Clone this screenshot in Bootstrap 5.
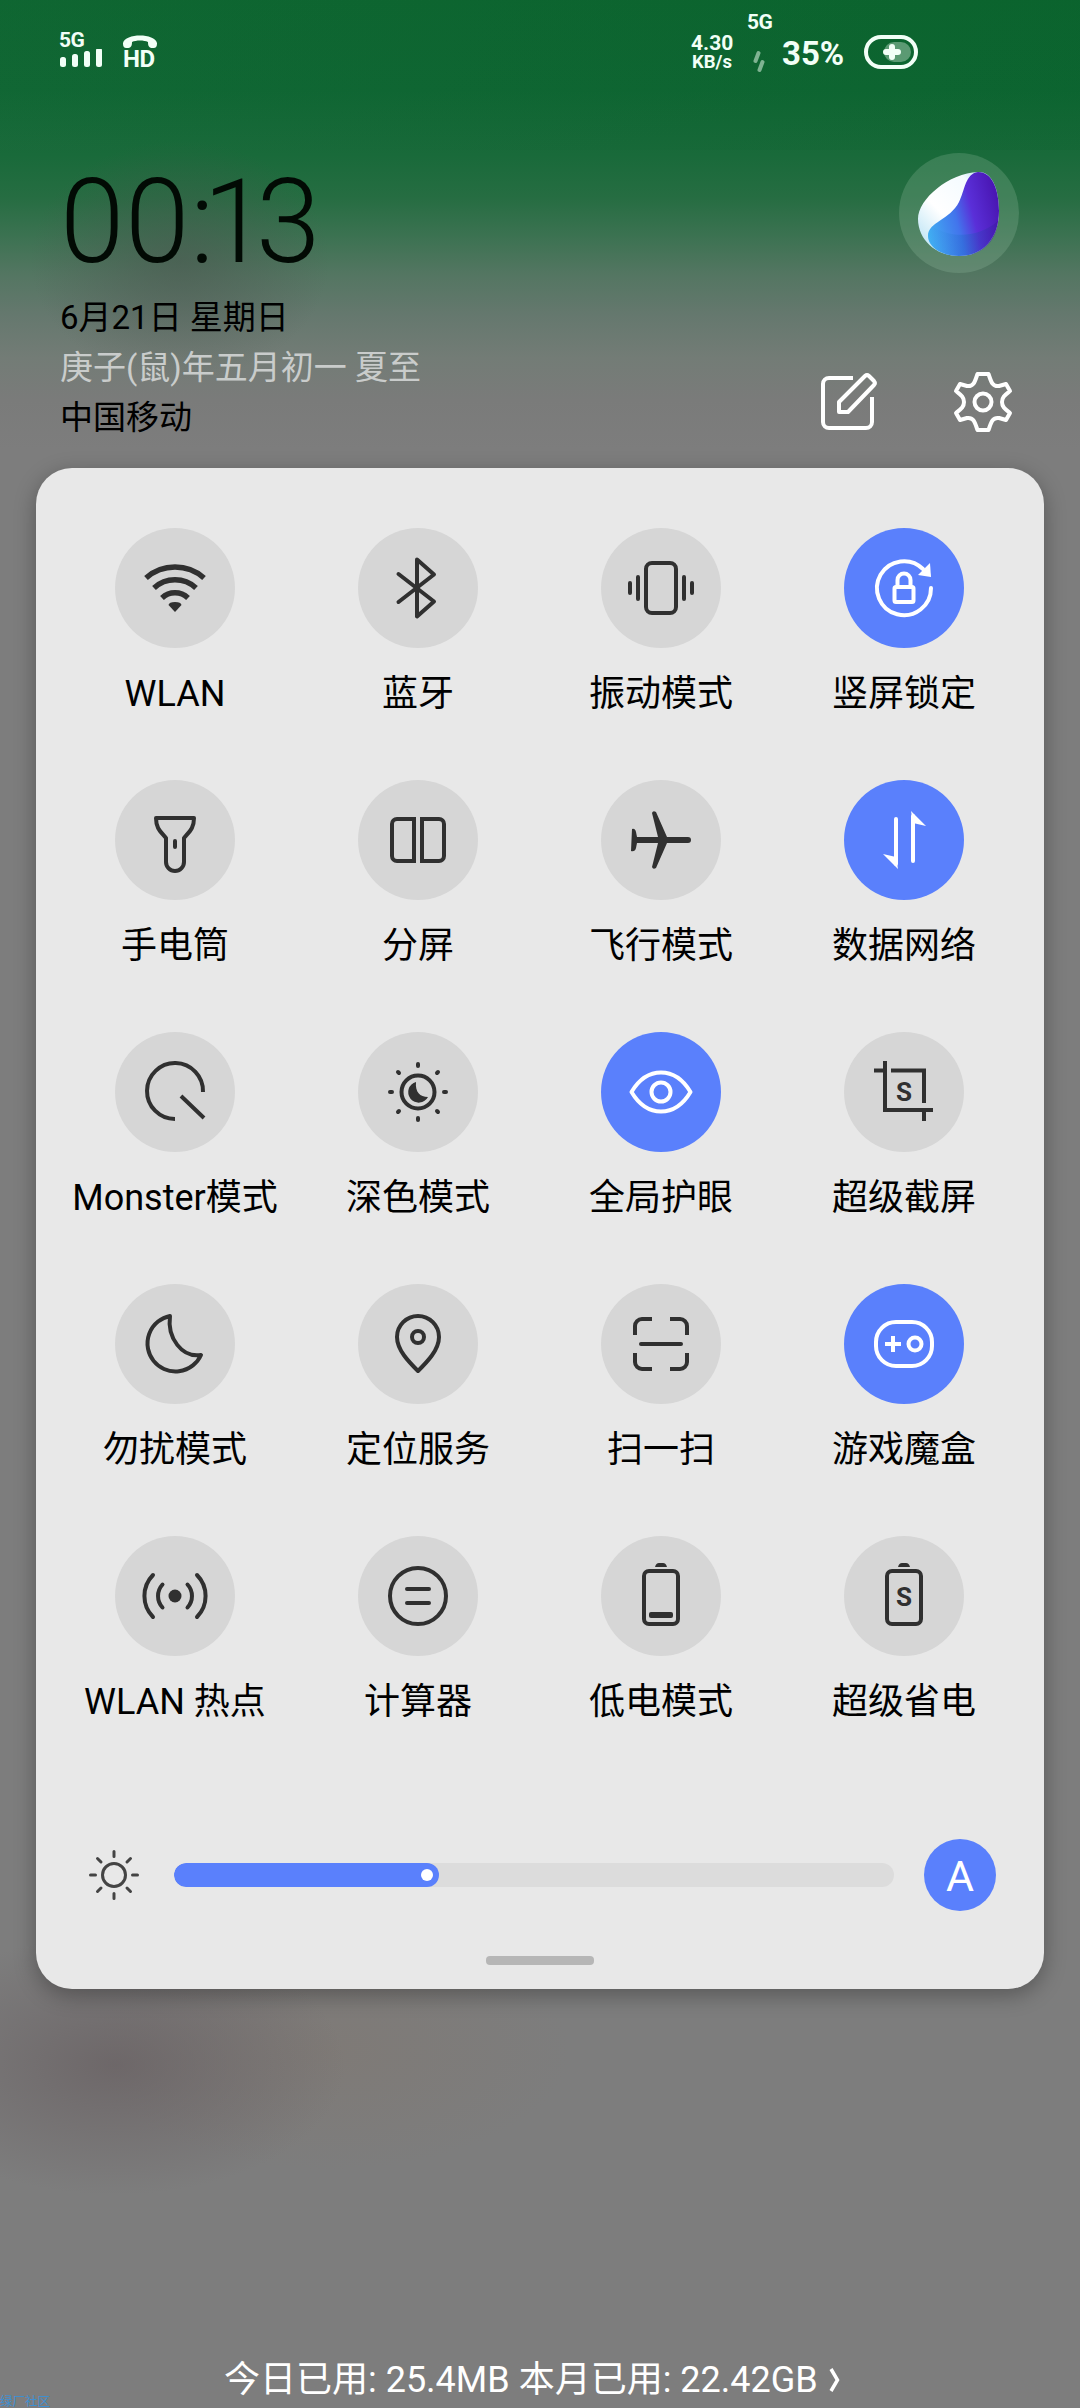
<!DOCTYPE html>
<html lang="zh-CN">
<head>
<meta charset="utf-8">
<meta name="viewport" content="width=device-width, initial-scale=1">
<title>控制中心</title>
<link href="https://cdn.jsdelivr.net/npm/bootstrap@5.3.0/dist/css/bootstrap.min.css" rel="stylesheet">
<style>
  body { font-family: Roboto, "Noto Sans CJK SC", sans-serif; color: #000; background: #7c7c7c; }
  .screen {
    width: 1080px; height: 2408px; overflow: hidden;
    background:
      radial-gradient(ellipse 230px 130px at 115px 2065px, rgba(104,96,98,.75), rgba(104,96,98,0)),
      radial-gradient(ellipse 240px 120px at 330px 2050px, rgba(128,118,110,.45), rgba(128,118,110,0)),
      radial-gradient(ellipse 150px 120px at 180px 260px, rgba(74,84,78,.55), rgba(74,84,78,0)),
      linear-gradient(90deg, rgba(40,110,70,.1), rgba(0,90,35,.12)) 0 0/1080px 150px no-repeat,
      linear-gradient(180deg, #0c652f 0, #0e6632 90px, #196a3a 155px, #266d42 198px, #3b7251 235px, #547662 275px, #65786e 315px, #737c76 358px, #7a7b7a 400px, #7d7d7d 450px, #7d7d7d 100%);
  }
  .statusbar { height: 90px; padding: 0 161px 0 59px; color: #f2fff7; }
  .statusbar svg, .tile svg { display: block; }
  .st-5g { font-size: 21px; font-weight: 700; line-height: 18px; letter-spacing: -.5px; }
  .st-left { padding-top: 31px; }
  .st-hd { font-size: 24px; font-weight: 700; line-height: 17px; width: 34px; margin-left: 20px; letter-spacing: -.5px; }
  .st-rate { width: 42px; margin-top: 33px; font-weight: 700; font-size: 21px; line-height: 20px; text-align: center; }
  .st-unit { font-size: 18.5px; line-height: 18px; }
  .st-net { width: 24px; margin: 13px 0 0 14px; }
  .st-pct { font-size: 33px; font-weight: 700; line-height: 40px; margin: 34px 0 0 11px; width: 66px; }
  .st-bat { margin: 34px 0 0 15px; }
  .heading { height: 378px; padding: 0 61px 0 60px; }
  .clock { height: 130px; margin-top: 65px; font-size: 116px; line-height: 134px; font-weight: 300; color: #020a04; }
  .clock span { width: 65px; }
  .clock .c-colon { width: 26px; margin-right: -2px; }
  .clock .c-one { width: 62px; margin-left: -11px; margin-right: -9px; }
  .dates { font-size: 33px; line-height: 50px; margin-top: 8px; white-space: nowrap; }
  .lunar { color: #c9cccb; }
  .assistant { width: 120px; height: 120px; margin-top: 63px; background: rgba(150,190,165,.25); }
  .tools { margin-top: 97px; gap: 67px; }
  .panel {
    width: 1008px; height: 1521px; margin: 0 36px; border-radius: 36px;
    background: #e8e8e8; box-shadow: 0 6px 22px rgba(0,0,0,.3);
  }
  .tiles { padding: 60px 18.5px 0 17.5px; }
  .tile { height: 252px; width: 243px; font-size: 36px; line-height: 54px; white-space: nowrap; }
  .disc { width: 120px; height: 120px; margin-bottom: 19px; background: #d6d6d6; color: #303030; }
  .disc.on { background: #5a80fc; color: #fff; }
  .disc svg { width: 120px; height: 120px; fill: none; stroke: currentColor; stroke-width: 4; }
  .disc .solid { fill: currentColor; stroke: none; }
  .disc text { font: 700 26px Roboto, sans-serif; fill: currentColor; stroke: none; text-anchor: middle; }
  .bright { height: 72px; margin-top: 51px; padding-left: 53px; }
  .track { width: 720px; height: 24px; margin: 0 30px 0 35px; background: #dcdcdc; border-radius: 12px; }
  .track .progress-bar { background: #5a80fc; border-radius: 12px; padding-right: 6px; }
  .knob { width: 12px; height: 12px; background: #fff; }
  .auto { width: 72px; height: 72px; background: #5a80fc; color: #fff; font-size: 43px; line-height: 74px; font-weight: 400; }
  .handle { width: 108px; height: 9px; margin-top: 45px; background: #b6b6b6; border-radius: 4px; }
  .usage { height: 419px; padding: 364px 0 0 224px; font-size: 36px; line-height: 54px; color: #fff; white-space: nowrap; }
  .usage svg { margin-left: 9px; margin-bottom: 5px; }
  .stamp { left: 0; bottom: 0; font-size: 12.5px; line-height: 13px; color: #3f8fd0; }
</style>
</head>
<body>
<main class="screen position-relative">
  <header class="statusbar d-flex justify-content-between">
    <div class="st-left d-flex">
      <div>
        <div class="st-5g">5G</div>
        <svg width="44" height="20" viewBox="0 0 44 20" fill="currentColor"><rect x="1" y="8" width="6" height="10" rx="2.5"/><rect x="13" y="5" width="6" height="13" rx="2.5"/><rect x="25" y="2" width="6" height="16" rx="2.5"/><rect x="37" y="-1" width="6" height="19" rx="2.5"/></svg>
      </div>
      <div class="st-hd">
        <svg width="34" height="20" viewBox="0 0 34 20" fill="currentColor"><path d="M0 12C2 2 32 2 34 12C34 16 33 17 30 17C26 17 25 15 25 11C21 9 13 9 9 11C9 15 8 17 4 17C1 17 0 16 0 12Z"/></svg>
        HD
      </div>
    </div>
    <div class="d-flex">
      <div class="st-rate">4.30<div class="st-unit">KB/s</div></div>
      <div class="st-net">
        <div class="st-5g">5G</div>
        <svg width="24" height="46" viewBox="0 0 24 46" stroke="#7fb392" stroke-width="4" stroke-linecap="round"><path d="M11.500 22L8.500 30M15.500 31L12.500 39"/></svg>
      </div>
      <div class="st-pct">35%</div>
      <svg class="st-bat" width="56" height="36" viewBox="0 0 56 36"><rect x="3" y="3" width="50" height="30" rx="15" fill="none" stroke="currentColor" stroke-width="4"/><rect x="21" y="8" width="27" height="20" rx="10" fill="#5b9a73"/><path d="M29 13v10M23 18h12" stroke="currentColor" stroke-width="6" stroke-linecap="round"/></svg>
    </div>
  </header>

  <section class="heading d-flex justify-content-between">
    <div>
      <div class="clock d-flex"><span>0</span><span>0</span><span class="c-colon">:</span><span class="c-one">1</span><span>3</span></div>
      <div class="dates">
        <div>6月21日 星期日</div>
        <div class="lunar">庚子(鼠)年五月初一 夏至</div>
        <div>中国移动</div>
      </div>
    </div>
    <div class="d-flex flex-column align-items-end">
      <div class="assistant rounded-circle">
        <svg width="120" height="120" viewBox="0 0 120 120">
          <defs>
            <linearGradient id="gw" x1="0" y1="1" x2="1" y2="0"><stop offset="0" stop-color="#a9dcf2"/><stop offset=".4" stop-color="#fff"/><stop offset=".75" stop-color="#f4fbff"/><stop offset="1" stop-color="#8fc4e8"/></linearGradient>
            <linearGradient id="gb" x1="0" y1=".75" x2="1" y2=".45"><stop offset="0" stop-color="#41b0f2"/><stop offset=".42" stop-color="#4274ec"/><stop offset=".65" stop-color="#5a2fd8"/><stop offset="1" stop-color="#4a17b4"/></linearGradient>
            <linearGradient id="gs" x1="0" y1="0" x2="1" y2="0"><stop offset="0" stop-color="#3da4f0" stop-opacity=".2"/><stop offset=".5" stop-color="#2668cc"/><stop offset="1" stop-color="#3c12a0"/></linearGradient>
          </defs>
          <path d="M79 19C93 18 100 36 100 58C100 85 84 103 60 103C36 103 19 86 19 66C19 46 50 20 79 19Z" fill="url(#gw)"/>
          <path d="M79 19C93 19 100 36 100 58C100 85 84 103 60 103C43 103 29 94 29 83C29 69 51 67 60 49C66 37 66 21 79 19Z" fill="url(#gb)"/>
          <path d="M33 73C50 85 78 86 99 68C97 90 82 103 60 103C43 103 29 94 29 83C29 79 31 76 33 73Z" fill="url(#gs)" opacity=".45"/>
        </svg>
      </div>
      <div class="tools d-flex">
        <svg width="64" height="64" viewBox="0 0 64 64" fill="none" stroke="#fff" stroke-width="4"><path d="M37 8H13a6 6 0 0 0-6 6V52a6 6 0 0 0 6 6H50a6 6 0 0 0 6-6V27"/><path d="M23 42V32L49 6a3 3 0 0 1 4 0L58 11a3 3 0 0 1 0 4L32 42Z" stroke-linejoin="round"/></svg>
        <svg width="72" height="64" viewBox="-36 -32 72 64" fill="none" stroke="#fff" stroke-width="4" stroke-linejoin="round"><circle r="8.500"/><path d="M-5.500-28H5.500C8-21 9-15 16-16L23-18L27-11C22-7 19-5 19 0C19 5 22 7 27 11L23 18L16 16C9 15 8 21 5.500 28H-5.500C-8 21-9 15-16 16L-23 18L-27 11C-22 7-19 5-19 0C-19-5-22-7-27-11L-23-18L-16-16C-9-15-8-21-5.500-28Z"/></svg>
      </div>
    </div>
  </section>

  <section class="panel">
    <div class="tiles d-flex flex-wrap">
      <div class="tile d-flex flex-column align-items-center"><div class="disc rounded-circle"><svg viewBox="-60 -60 120 120"><g stroke-width="5.500"><path d="M-29-10A44 44 0 0 1 29-10"/><path d="M-21 0A31 31 0 0 1 21 0"/><path d="M-13 10A19 19 0 0 1 13 10"/></g><path class="solid" d="M0 24L-6.500 17Q-6 14 0 14Q6 14 6.500 17Z"/></svg></div>WLAN</div>
      <div class="tile d-flex flex-column align-items-center"><div class="disc rounded-circle"><svg viewBox="-60 -60 120 120" stroke-linecap="round" stroke-linejoin="round"><path d="M-19.500-14L16 13.500L-1 28.500V-28.500L16-13.500L-19.500 14"/></svg></div>蓝牙</div>
      <div class="tile d-flex flex-column align-items-center"><div class="disc rounded-circle"><svg viewBox="-60 -60 120 120" stroke-linecap="round"><rect x="-15" y="-25" width="30" height="50" rx="6"/><path d="M-23-11V11M23-11V11M-31-5V5M31-5V5"/></svg></div>振动模式</div>
      <div class="tile d-flex flex-column align-items-center"><div class="disc on rounded-circle"><svg viewBox="-60 -60 120 120" stroke-linecap="round"><path d="M27 0A27 27 0 1 1 19-19"/><path class="solid" d="M26-25L27-11L14-13Z"/><rect x="-9.500" y="-1" width="19" height="15" rx="1.500"/><path d="M-6.500-1V-8a6.500 6.500 0 0 1 13 0V-1"/></svg></div>竖屏锁定</div>

      <div class="tile d-flex flex-column align-items-center"><div class="disc rounded-circle"><svg viewBox="-60 -60 120 120" stroke-linecap="round" stroke-linejoin="round"><path d="M-19-22H19C19-12 15-9 9-2V22A9 9 0 0 1-9 22V-2C-15-9-19-12-19-22ZM0 1V7"/></svg></div>手电筒</div>
      <div class="tile d-flex flex-column align-items-center"><div class="disc rounded-circle"><svg viewBox="-60 -60 120 120"><path d="M-4-21H-21a5 5 0 0 0-5 5V16a5 5 0 0 0 5 5H-4ZM4-21H21a5 5 0 0 1 5 5V16a5 5 0 0 1-5 5H4Z"/></svg></div>分屏</div>
      <div class="tile d-flex flex-column align-items-center"><div class="disc rounded-circle"><svg viewBox="-60 -60 120 120"><path class="solid" d="M-29-11Q-26-12-25-8L-24-3H-3L-9-27Q-8-30-5-28L6-3H27A3 3 0 0 1 27 3H6L-5 28Q-8 30-9 27L-3 3H-24L-25 8Q-26 12-30 11Z"/></svg></div>飞行模式</div>
      <div class="tile d-flex flex-column align-items-center"><div class="disc on rounded-circle"><svg viewBox="-60 -60 120 120" stroke-linecap="round"><path d="M-8-21V24M9 21V-24"/><path class="solid" d="M-6 29L-21 14L-8 17ZM7-29L22-14L9-17Z"/></svg></div>数据网络</div>

      <div class="tile d-flex flex-column align-items-center"><div class="disc rounded-circle"><svg viewBox="-60 -60 120 120"><path d="M28 0A28 28 0 1 0 0 27M6 4L29 26"/></svg></div>Monster模式</div>
      <div class="tile d-flex flex-column align-items-center"><div class="disc rounded-circle"><svg viewBox="-60 -60 120 120" stroke-linecap="round"><circle r="16.500"/><path d="M0-28V-26M0 28V26M-28 0H-26M28 0H26M-20-20L-19-19M20-20L19-19M-20 20L-19 19M20 20L19 19"/><path class="solid" d="M-2-10C-3 0 2 5 10 5A10.500 10.500 0 1 1-2-10Z"/></svg></div>深色模式</div>
      <div class="tile d-flex flex-column align-items-center"><div class="disc on rounded-circle"><svg viewBox="-60 -60 120 120" stroke-linejoin="round"><path d="M-29.500 0C-14-26 14-26 29.500 0C14 26-14 26-29.500 0Z"/><circle r="9.500"/></svg></div>全局护眼</div>
      <div class="tile d-flex flex-column align-items-center"><div class="disc rounded-circle"><svg viewBox="-60 -60 120 120"><path d="M-19-31V18H29M-30-21.500H-21M-13-21.500H20V11M20 20V29"/><text x="0" y="9">S</text></svg></div>超级截屏</div>

      <div class="tile d-flex flex-column align-items-center"><div class="disc rounded-circle"><svg viewBox="-60 -60 120 120" stroke-linejoin="round"><path d="M-5-28A28 28 0 1 0 26 11C7 14-8-6-5-28Z"/></svg></div>勿扰模式</div>
      <div class="tile d-flex flex-column align-items-center"><div class="disc rounded-circle"><svg viewBox="-60 -60 120 120" stroke-linejoin="round"><path d="M0 27C-9 18-21 6-21-7A21 21 0 0 1 21-7C21 6 9 18 0 27Z"/><circle cy="-7" r="6"/></svg></div>定位服务</div>
      <div class="tile d-flex flex-column align-items-center"><div class="disc rounded-circle"><svg viewBox="-60 -60 120 120"><path d="M-26-9V-18a7 7 0 0 1 7-7H-9M26-9V-18a7 7 0 0 0-7-7H9M-26 9V18a7 7 0 0 0 7 7H-9M26 9V18a7 7 0 0 1-7 7H9"/><path d="M-20 0H20" stroke-linecap="round"/></svg></div>扫一扫</div>
      <div class="tile d-flex flex-column align-items-center"><div class="disc on rounded-circle"><svg viewBox="-60 -60 120 120"><rect x="-28" y="-22" width="56" height="44" rx="20"/><path d="M-11-8V8M-19 0H-3"/><circle cx="11" r="6.500"/></svg></div>游戏魔盒</div>

      <div class="tile d-flex flex-column align-items-center"><div class="disc rounded-circle"><svg viewBox="-60 -60 120 120" stroke-linecap="round"><circle class="solid" r="6.500"/><path d="M-12.500-11.500A17 17 0 0 0-12.500 11.500M12.500-11.500A17 17 0 0 1 12.500 11.500M-22-21A30 30 0 0 0-22 21M22-21A30 30 0 0 1 22 21"/></svg></div>WLAN 热点</div>
      <div class="tile d-flex flex-column align-items-center"><div class="disc rounded-circle"><svg viewBox="-60 -60 120 120" stroke-linecap="round"><circle r="28"/><path d="M-11-7H11M-11 7H11"/></svg></div>计算器</div>
      <div class="tile d-flex flex-column align-items-center"><div class="disc rounded-circle"><svg viewBox="-60 -60 120 120"><rect x="-17" y="-25" width="34" height="53" rx="5"/><path class="solid" d="M-6-29Q-5-33-2-33H2Q5-33 6-29Z"/><rect class="solid" x="-12" y="16" width="24" height="6" rx="2"/></svg></div>低电模式</div>
      <div class="tile d-flex flex-column align-items-center"><div class="disc rounded-circle"><svg viewBox="-60 -60 120 120"><rect x="-17" y="-25" width="34" height="53" rx="5"/><path class="solid" d="M-6-29Q-5-33-2-33H2Q5-33 6-29Z"/><text x="0" y="10">S</text></svg></div>超级省电</div>
    </div>

    <div class="bright d-flex align-items-center">
      <svg width="50" height="52" viewBox="-25 -26 50 52" fill="none" stroke="#444" stroke-width="3" stroke-linecap="round"><circle r="11.500"/><path d="M0-23.500V-18.500M0 23.500V18.500M-23.500 0H-18.500M23.500 0H18.500M-16.500-16.500L-13-13M16.500-16.500L13-13M-16.500 16.500L-13 13M16.500 16.500L13 13"/></svg>
      <div class="track progress">
        <div class="progress-bar d-flex flex-row align-items-center justify-content-end" style="width:36.8%"><span class="knob rounded-circle"></span></div>
      </div>
      <div class="auto rounded-circle text-center">A</div>
    </div>
    <div class="handle mx-auto"></div>
  </section>

  <footer class="usage">今日已用: 25.4MB 本月已用: 22.42GB<svg width="16" height="28" viewBox="0 0 16 28" fill="none" stroke="#fff" stroke-width="3.500"><path d="M4 3L10.500 14L4 25"/></svg></footer>
  <div class="stamp position-absolute">绿厂社区</div>
</main>
<script src="https://cdn.jsdelivr.net/npm/bootstrap@5.3.0/dist/js/bootstrap.bundle.min.js"></script>
</body>
</html>
